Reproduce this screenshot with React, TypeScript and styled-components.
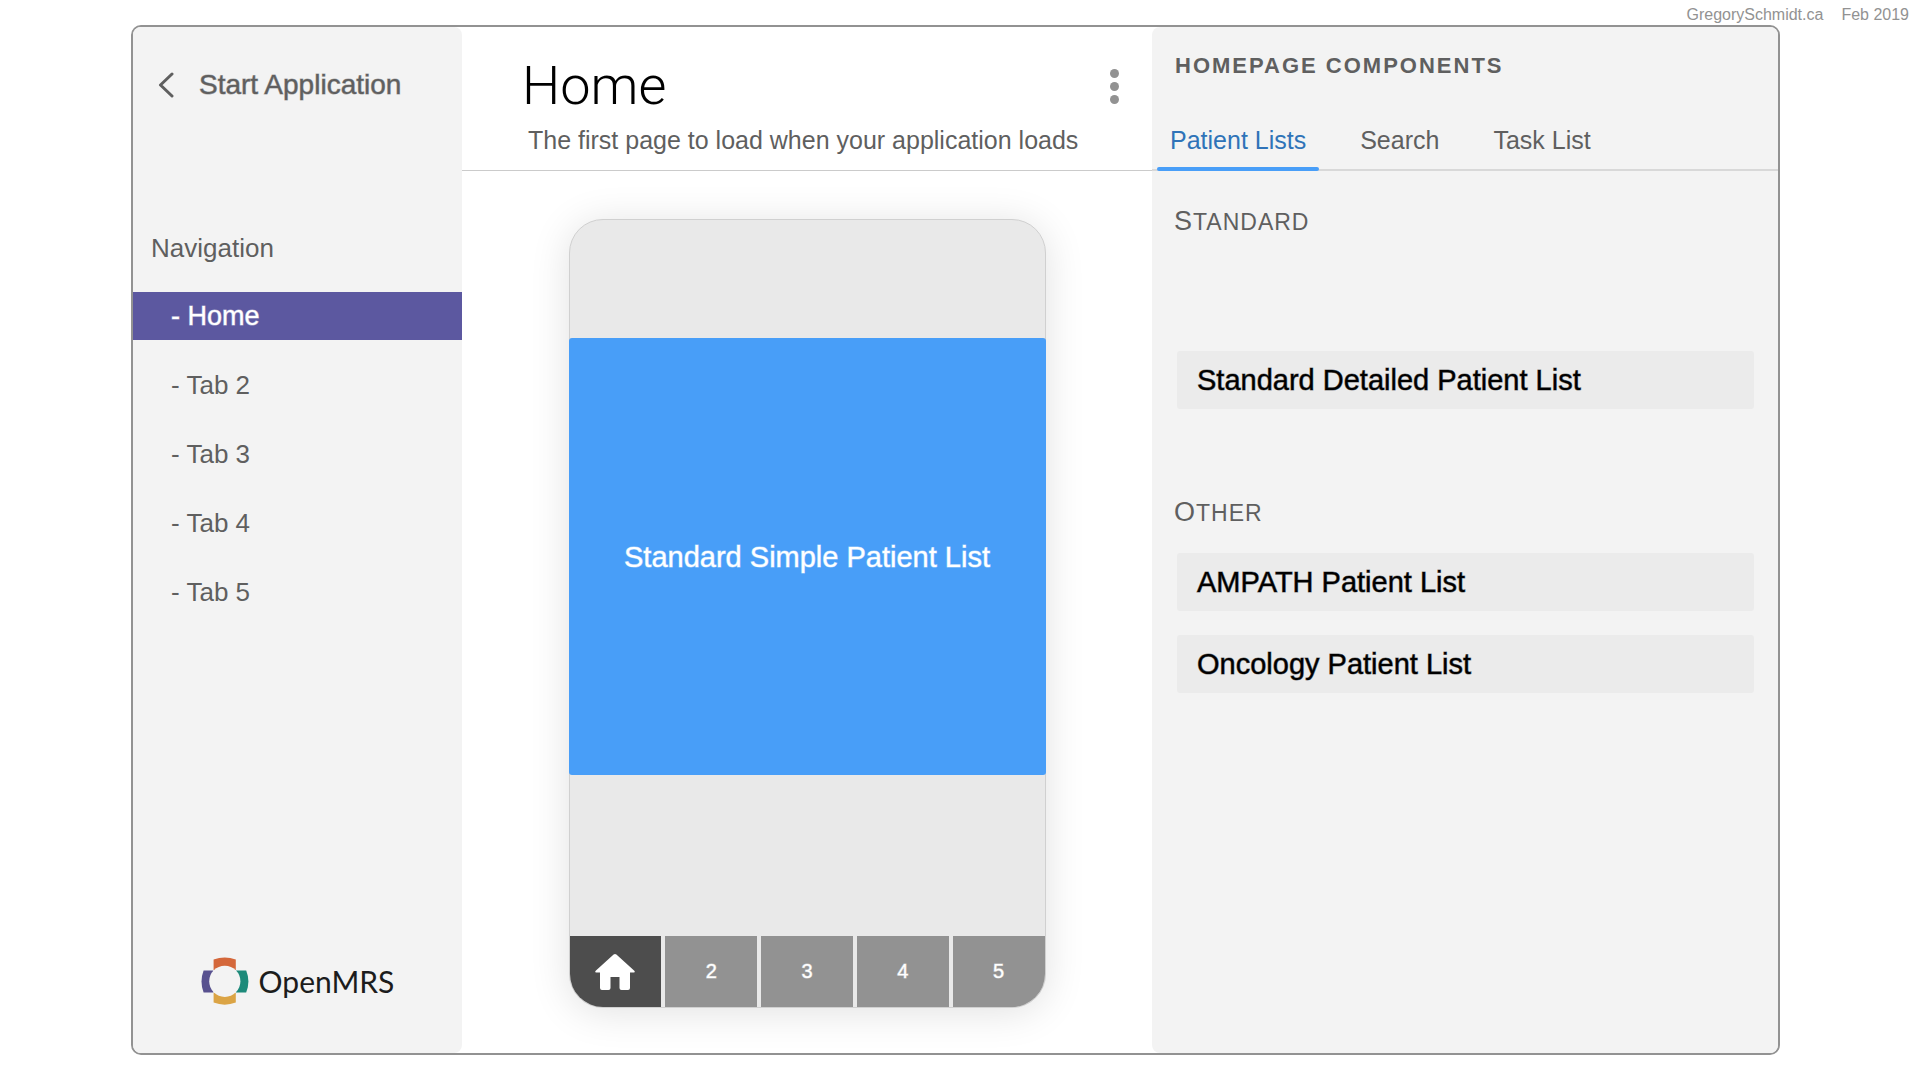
import React, { useState } from "react";
import styled, { createGlobalStyle, css } from "styled-components";

const color = {
  panel: "#f3f3f3",
  card: "#ebebeb",
  text: "#5f5f5f",
  line: "#929292",
  rule: "#cbcbcb",
  purple: "#5c58a0",
  blue: "#489ef8",
  link: "#2f73b8",
};

const GlobalStyle = createGlobalStyle`
  *, *::before, *::after { box-sizing: border-box; }
  body {
    margin: 0;
    background: #fff;
    color: ${color.text};
    font-family: "Liberation Sans", Arial, sans-serif;
  }
  h1, h2, h3, p, ul { margin: 0; padding: 0; font-weight: 400; }
  ul { list-style: none; }
  button { border: 0; background: none; padding: 0; font: inherit; color: inherit; cursor: pointer; }
  a { color: inherit; text-decoration: none; }
`;

/* The type family has no medium cut, so a faint outline thickens the regular one. */
const medium = css`
  -webkit-text-stroke: 1px color-mix(in srgb, currentColor 50%, transparent);
`;

const Page = styled.div`
  display: flex;
  flex-direction: column;
  min-height: 100vh;
  padding: 0 140px 25px 131px;
`;

const Credit = styled.header`
  display: flex;
  justify-content: flex-end;
  gap: 18px;
  height: 25px;
  margin-right: -129px;
  padding-top: 5px;
  font-size: 16px;
  line-height: 20px;
  color: ${color.line};
`;

const Frame = styled.div`
  flex: 1;
  display: grid;
  grid-template-columns: 329px minmax(500px, 1fr) 626px;
  border: 2px solid ${color.line};
  border-radius: 10px;
`;

const Sidebar = styled.aside`
  display: flex;
  flex-direction: column;
  background: ${color.panel};
  border-radius: 8px;
`;

const BackLink = styled.a`
  display: flex;
  align-items: center;
  gap: 24px;
  padding: 42px 24px 0;
  font-size: 28px;
  line-height: 32px;
  ${medium}
`;

const NavTitle = styled.h2`
  margin-top: 131px;
  padding: 0 18px;
  font-size: 26px;
  line-height: 32px;
`;

const NavList = styled.ul`
  display: grid;
  gap: 21px;
  padding-top: 28px;
`;

const NavLink = styled.a<{ $active: boolean }>`
  display: block;
  padding: 0 38px;
  font-size: 26px;
  line-height: 48px;
  ${(p) => p.$active && css`
    background: ${color.purple};
    color: #fff;
    font-size: 27px;
    ${medium}
  `}
`;

const Brand = styled.div`
  display: flex;
  gap: 10px;
  justify-content: center;
  margin-top: auto;
  padding-bottom: 48px;
  font-family: Lato, sans-serif;
  font-size: 30px;
  line-height: 48px;
  color: #1c1c1c;
`;

const Editor = styled.main`
  display: flex;
  flex-direction: column;
`;

const EditorHeader = styled.header`
  height: 144px;
  padding: 27px 26px 0 60px;
  border-bottom: 1px solid ${color.rule};
`;

const TitleRow = styled.div`
  display: flex;
  align-items: center;
  justify-content: space-between;
`;

const Title = styled.h1`
  font-family: Roboto, sans-serif;
  font-weight: 300;
  font-size: 54px;
  line-height: 64px;
  color: #000;
`;

const Subtitle = styled.p`
  padding: 6px 0 0 6px;
  font-size: 25px;
  line-height: 32px;
`;

const MenuButton = styled.button`
  display: grid;
  justify-content: center;
  align-content: center;
  gap: 4px;
  width: 24px;
  height: 40px;
`;

const Dot = styled.span`
  width: 9px;
  height: 9px;
  border-radius: 50%;
  background: ${color.line};
`;

const Phone = styled.section`
  flex: 1;
  display: flex;
  flex-direction: column;
  align-self: center;
  width: 477px;
  margin: 48px 0 45px;
  padding-top: 118px;
  border: 1px solid #d0d0d0;
  border-radius: 34px;
  background: #e9e9e9;
  box-shadow: 0 4px 40px rgba(0, 0, 0, 0.12);
`;

const Widget = styled.div`
  display: grid;
  place-items: center;
  min-height: 437px;
  margin: 0 -1px 48px;
  border-radius: 3px;
  background: ${color.blue};
  color: #fff;
  font-size: 29px;
  line-height: 32px;
  ${medium}
`;

const PhoneTabs = styled.nav`
  display: grid;
  grid-template-columns: repeat(5, 1fr);
  gap: 4px;
  margin-top: auto;
`;

const PhoneTab = styled.button<{ $active: boolean }>`
  display: grid;
  place-items: center;
  height: 71px;
  background: ${(p) => (p.$active ? "#4d4d4d" : color.line)};
  color: #fff;
  font-size: 20px;
  ${medium}
  &:first-child { border-bottom-left-radius: 33px; }
  &:last-child { border-bottom-right-radius: 33px; }
`;

const Library = styled.aside`
  background: ${color.panel};
  border-radius: 8px;
`;

const LibraryTitle = styled.h2`
  padding: 27px 23px 0;
  font-size: 22px;
  font-weight: 700;
  line-height: 24px;
  letter-spacing: 2px;
  text-transform: uppercase;
`;

const Tabs = styled.div`
  display: flex;
  gap: 28px;
  margin-top: 46px;
  padding-left: 5px;
  height: 47px;
  border-bottom: 2px solid #d8d8d8;
`;

const Tab = styled.button<{ $active: boolean }>`
  position: relative;
  height: 47px;
  padding: 0 13px 15px;
  font-size: 25px;
  line-height: 32px;
  ${(p) => p.$active && css`
    color: ${color.link};
    &::after {
      content: "";
      position: absolute;
      left: 0;
      right: 0;
      bottom: 0;
      height: 4px;
      border-radius: 2px;
      background: ${color.blue};
    }
  `}
`;

const GroupTitle = styled.h3<{ $top: number }>`
  padding: ${(p) => p.$top}px 22px 0;
  font-size: 23px;
  line-height: 32px;
  letter-spacing: 1px;
  text-transform: uppercase;
  &::first-letter {
    font-size: 27px;
    line-height: 1;
  }
`;

const CardList = styled.ul`
  display: grid;
  gap: 24px;
  padding: 24px 24px 0 25px;
`;

const EmptySlot = styled.li`
  height: 65px;
`;

const Card = styled.button`
  display: block;
  width: 100%;
  padding: 13px 20px;
  border-radius: 3px;
  background: ${color.card};
  color: #000;
  font-size: 29px;
  line-height: 32px;
  text-align: left;
  ${medium}
`;

const Chevron = () => (
  <svg width="18" height="26" viewBox="0 0 18 26" fill="none" stroke={color.text} strokeWidth="3" strokeLinecap="round" strokeLinejoin="round" aria-hidden="true">
    <path d="M15 2 3.500 13l11.500 11" />
  </svg>
);

const LogoMark = () => (
  <svg width="48" height="48" viewBox="0 0 48 48" aria-hidden="true">
    <path fill="#d4673a" d="M12.6 2.6Q23.7-1.7 34.8 2.6V13H12.6Z" />
    <path fill="#dba445" d="M12.6 45.6Q23.7 49.9 34.8 45.6V35.4H12.6Z" />
    <path fill="#58518f" d="M12.4 13.4H2.6Q-1.6 24.4 2.6 35.4H12.4Z" />
    <path fill="#1d8a7a" d="M35 13.4H45.2Q49.6 24.4 45.2 35.4H35Z" />
    <circle cx="23.8" cy="24.3" r="15.6" fill={color.panel} />
  </svg>
);

const House = () => (
  <svg width="40" height="36" viewBox="0 0 40 36" fill="#fff" aria-hidden="true">
    <path d="M18.6.6Q20-.5 21.4.6L39.3 16.7Q40.6 18.4 38.8 18.5H35V34Q35 36 33 36H26.5Q24.5 36 24.5 34V23H15.5V34Q15.5 36 13.500 36H7Q5 36 5 34V18.500H1.200Q-.6 18.400.7 16.700Z" />
  </svg>
);

const screens = ["Home", "Tab 2", "Tab 3", "Tab 4", "Tab 5"];
const categories = ["Patient Lists", "Search", "Task List"];
const otherLists = ["AMPATH Patient List", "Oncology Patient List"];

export default function App() {
  const [screen, setScreen] = useState(0);
  const [category, setCategory] = useState(0);

  return (
    <>
      <GlobalStyle />
      <Page>
        <Credit>
          <span>GregorySchmidt.ca</span>
          <span>Feb 2019</span>
        </Credit>
        <Frame>
          <Sidebar>
            <BackLink href="#start">
              <Chevron />
              Start Application
            </BackLink>
            <nav>
              <NavTitle>Navigation</NavTitle>
              <NavList>
                {screens.map((name, i) => (
                  <li key={name}>
                    <NavLink href={`#screen-${i + 1}`} $active={i === screen} onClick={() => setScreen(i)}>
                      - {name}
                    </NavLink>
                  </li>
                ))}
              </NavList>
            </nav>
            <Brand>
              <LogoMark />
              <span>OpenMRS</span>
            </Brand>
          </Sidebar>

          <Editor>
            <EditorHeader>
              <TitleRow>
                <Title>Home</Title>
                <MenuButton aria-label="More options">
                  <Dot />
                  <Dot />
                  <Dot />
                </MenuButton>
              </TitleRow>
              <Subtitle>The first page to load when your application loads</Subtitle>
            </EditorHeader>
            <Phone>
              <Widget>Standard Simple Patient List</Widget>
              <PhoneTabs>
                {screens.map((name, i) => (
                  <PhoneTab key={name} aria-label={name} $active={i === screen} onClick={() => setScreen(i)}>
                    {i === 0 ? <House /> : i + 1}
                  </PhoneTab>
                ))}
              </PhoneTabs>
            </Phone>
          </Editor>

          <Library>
            <LibraryTitle>Homepage Components</LibraryTitle>
            <Tabs role="tablist">
              {categories.map((name, i) => (
                <Tab key={name} role="tab" aria-selected={i === category} $active={i === category} onClick={() => setCategory(i)}>
                  {name}
                </Tab>
              ))}
            </Tabs>
            <GroupTitle $top={35}>Standard</GroupTitle>
            <CardList>
              <EmptySlot />
              <li>
                <Card>Standard Detailed Patient List</Card>
              </li>
            </CardList>
            <GroupTitle $top={88}>Other</GroupTitle>
            <CardList>
              {otherLists.map((name) => (
                <li key={name}>
                  <Card>{name}</Card>
                </li>
              ))}
            </CardList>
          </Library>
        </Frame>
      </Page>
    </>
  );
}
